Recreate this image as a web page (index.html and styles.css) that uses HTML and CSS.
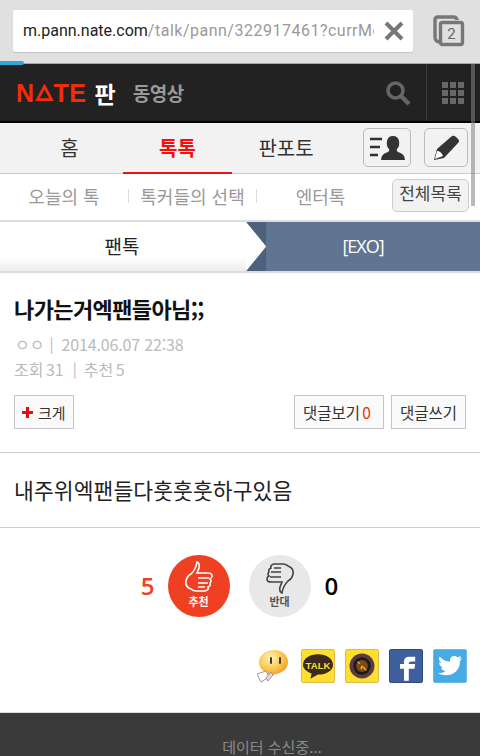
FILE: index.html
```html
<!DOCTYPE html>
<html lang="ko">
<head>
    <meta charset="UTF-8">
    <meta name="viewport" content="width=device-width, initial-scale=1.0">
    <link rel="stylesheet" href="styles.css">
    <title>네이트 판</title>
</head>
<body>
    <div class="page">
        <div class="browser-bar">
            <div class="url-box">
                <div class="url-text"><span class="url-host">m.pann.nate.com</span>/talk/pann/322917461?currMenu=talk</div>
                <svg class="url-close" width="20" height="20" viewBox="0 0 20 20"><path d="M2 2 L18 18 M18 2 L2 18" stroke="#777" stroke-width="4"/></svg>
            </div>
            <svg class="tabs-icon" width="32" height="32" viewBox="0 0 32 32">
                <path d="M7 27 Q2 27 2 22 V5 Q2 2 5 2 H20 Q24 2 24 5" fill="none" stroke="#777" stroke-width="3.4"/>
                <rect x="7.500" y="7.500" width="22" height="22" rx="2" fill="#e0e0e0" stroke="#777" stroke-width="3.4"/>
                <text x="18.500" y="24" class="tabs-count">2</text>
            </svg>
        </div>
        <div class="progress"></div>

        <div class="top-bar">
            <div class="logo">N<svg class="logo-a" width="19" height="18" viewBox="0 0 19 18"><path d="M9.500 2.500 L16.500 15.700 H2.500 Z" fill="none" stroke="#f32c0a" stroke-width="2.800"/></svg>TE</div>
            <div class="logo-pann">판</div>
            <div class="logo-sub">동영상</div>
            <svg class="search-icon" width="26" height="26" viewBox="0 0 26 26"><circle cx="10.500" cy="10.500" r="7.500" fill="none" stroke="#666" stroke-width="3.600"/><path d="M16 16 L24 24" stroke="#666" stroke-width="4.400"/></svg>
            <div class="grid-btn">
                <div class="dots">
                    <i></i><i></i><i></i><i></i><i></i><i></i><i></i><i></i><i></i>
                </div>
            </div>
        </div>

        <div class="main-nav">
            <a class="nav-item home">홈</a>
            <a class="nav-item active">톡톡</a>
            <a class="nav-item pantoto">판포토</a>
            <div class="nav-icon user-btn">
                <svg width="36" height="26" viewBox="0 0 36 26"><path d="M1 4 H13 M1 12 H11 M1 20 H9" stroke="#333" stroke-width="2.400"/><path d="M12 25 Q12 19 19 17 Q21 16 20 14 Q17 11 18 6 Q19 1 24 1 Q29 1 30 6 Q31 11 28 14 Q27 16 29 17 Q36 19 36 25 Z" fill="#333"/></svg>
            </div>
            <div class="nav-icon write-btn">
                <svg width="28" height="28" viewBox="0 0 28 28"><path d="M20 2 Q22 1 24 3 L26 5 Q28 7 26 9 L12 24 L2 26 L5 15 Z" fill="#333"/><path d="M5 17 Q9 17 11 22 L3 25 Z" fill="#fff"/></svg>
            </div>
        </div>

        <div class="sub-nav">
            <a class="sub-item today">오늘의 톡</a>
            <a class="sub-item talkers">톡커들의 선택</a>
            <a class="sub-item enter">엔터톡</a>
            <a class="all-btn">전체목록</a>
        </div>

        <div class="crumbs">
            <div class="crumb-left">팬톡</div>
            <svg class="crumb-arrow" width="20" height="49" viewBox="0 0 20 49">
                <path d="M0 0 L20 24.500 L0 49 H20 V0 Z" fill="#4c617c"/>
                <path d="M0 0 L20 24.500 L0 49 Z" fill="#fff"/>
            </svg>
            <div class="crumb-right">[EXO]</div>
        </div>

        <div class="post-head">
            <h1 class="post-title">나가는거엑팬들아님;;</h1>
            <div class="post-meta"><span class="author">ㅇㅇ</span><span class="bar">|</span><span class="post-date">2014.06.07 22:38</span></div>
            <div class="post-meta stats"><span>조회 31</span><span class="bar">|</span><span>추천 5</span></div>
            <div class="post-actions">
                <a class="btn grow-btn"><span class="plus"></span>크게</a>
                <a class="btn view-btn">댓글보기 <em>0</em></a>
                <a class="btn">댓글쓰기</a>
            </div>
        </div>

        <div class="post-body">내주위엑팬들다훗훗훗하구있음</div>

        <div class="votes">
            <span class="vote-num up">5</span>
            <div class="vote-circle up">
                <svg width="30" height="33" viewBox="0 0 30 33"><path d="M13 1 Q16 2 15 7 L13 12 H24 Q28 12 28 15 Q28 17 26 18 Q28 20 26 22 Q27 25 24 26 Q25 29 21 30 H12 Q9 30 7 28 Q1 26 2 20 Q3 15 7 13 Q12 8 13 1 Z M14 17 H25 M14 22 H24 M14 26 H21" fill="none" stroke="#fff" stroke-width="1.600"/></svg>
                <span>추천</span>
            </div>
            <div class="vote-circle down">
                <svg width="30" height="33" viewBox="0 0 30 33"><path d="M17 32 Q14 31 15 26 L17 21 H6 Q2 21 2 18 Q2 16 4 15 Q2 13 4 11 Q3 8 6 7 Q5 4 9 3 H18 Q21 3 23 5 Q29 7 28 13 Q27 18 23 20 Q18 25 17 32 Z M16 16 H5 M16 11 H6 M16 7 H9" fill="none" stroke="#444" stroke-width="1.600"/></svg>
                <span>반대</span>
            </div>
            <span class="vote-num down">0</span>
        </div>

        <div class="share">
            <svg class="share-icon" width="32" height="34" viewBox="0 0 32 34">
                <defs><radialGradient id="bub" cx="0.4" cy="0.3" r="0.8"><stop offset="0" stop-color="#fff3c4"/><stop offset="0.5" stop-color="#fbc94e"/><stop offset="1" stop-color="#e88a14"/></radialGradient></defs>
                <path d="M17 1 C26 1 31 7 31 13 C31 19 26 24 19 25 L10 28 L11 24 C5 22 2 18 2 13 C2 6 9 1 17 1 Z" fill="url(#bub)"/>
                <path d="M14 9 V14 M23 9 V14" stroke="#4a3a20" stroke-width="2" stroke-linecap="round"/>
                <path d="M0 25 L9 22 L12 28 L4 33 Z" fill="#fff" stroke="#999" stroke-width="1"/>
                <path d="M9 29 L14 23 L16 26 L11 32 Z" fill="#ddd" stroke="#999" stroke-width="1"/>
            </svg>
            <div class="share-box kakao">
                <svg width="30" height="26" viewBox="0 0 28 24">
                    <path d="M14 1 C22 1 28 5 28 11 C28 16 22 20 14 20 L7 24 L8 19 C3 17 0 14 0 11 C0 5 6 1 14 1 Z" fill="#3a2a20"/>
                    <text x="14" y="14.500" class="kakao-text">TALK</text>
                </svg>
            </div>
            <div class="share-box story">
                <svg width="26" height="26" viewBox="0 0 24 24">
                    <circle cx="12" cy="12" r="11.500" fill="#5a3a44"/>
                    <circle cx="12" cy="12" r="8" fill="#1e1a16"/>
                    <circle cx="12" cy="12" r="5.500" fill="#7a4a18"/>
                    <path d="M12 12 L16 16 M12 12 L11 15 M8 8 L10 10" stroke="#f1a21d" stroke-width="1.400"/>
                </svg>
            </div>
            <div class="share-box fb">
                <svg width="16" height="28" viewBox="0 0 20 32"><path d="M5 32 V17 H0 V11 H5 V8 Q5 2 12 2 H19 V8 H14 Q11 8 11 10 V11 H19 L18 17 H11 V32 Z" fill="#fff"/></svg>
            </div>
            <div class="share-box tw">
                <svg width="24" height="22" viewBox="0 0 24 22"><path d="M24 3 Q22 4 21 4 Q23 3 23 1 Q21 2 19.500 2.400 C17 -0.500 12 1 12 5 V6.500 C8 6.500 4 4.500 1.600 1.500 C0.500 4 1.200 6.500 3.200 8 Q2 8 1 7.500 C1 10 3 12 5 12.500 Q4 12.800 3 12.600 C3.600 14.600 5.500 16 7.500 16 C5.500 17.600 3 18.300 0 18 C8 23 22 20 22 6 Q23 5 24 3 Z" fill="#fff"/></svg>
            </div>
        </div>

        <div class="footer">데이터 수신중...</div>

        <div class="scrollbar"></div>
    </div>
</body>
</html>
```

FILE: styles.css
```css
* {
    box-sizing: border-box;
}

html, body {
    margin: 0;
    padding: 0;
}

body {
    font-family: "Noto Sans CJK KR", "Noto Sans", sans-serif;
    background-color: #ffffff;
}

a {
    color: inherit;
    text-decoration: none;
}

.page {
    position: relative;
    width: 480px;
    height: 756px;
    overflow: hidden;
}

/* browser chrome */
.browser-bar {
    display: flex;
    align-items: center;
    height: 64px;
    padding: 0 0 2px 13px;
    background-color: #e0e0e0;
    border-bottom: 1px solid #a8a8a8;
}

.url-box {
    display: flex;
    align-items: center;
    width: 400px;
    height: 42px;
    padding: 0 9px 0 10px;
    background-color: #ffffff;
    border-radius: 2px;
    box-shadow: 0 1px 1px #c4c4c4;
}

.url-text {
    flex: 1;
    overflow: hidden;
    white-space: nowrap;
    font-family: Roboto, sans-serif;
    font-size: 16px;
    letter-spacing: 0.5px;
    color: #999999;
}

.url-host {
    letter-spacing: 0;
    color: #222222;
}

.url-close {
    margin-left: 10px;
}

.tabs-icon {
    margin-left: 20px;
}

.tabs-count {
    font-family: Roboto, sans-serif;
    font-size: 15px;
    fill: #666666;
    text-anchor: middle;
}

.progress {
    position: absolute;
    left: 0;
    top: 61px;
    width: 24px;
    height: 4px;
    background-color: #2fa8dc;
    border-radius: 0 2px 2px 0;
}

/* site header */
.top-bar {
    display: flex;
    align-items: center;
    height: 59px;
    padding-left: 16px;
    background-color: #222222;
    border-bottom: 2px solid #000000;
}

.logo {
    display: flex;
    align-items: center;
    font-family: "Liberation Sans", sans-serif;
    font-size: 25px;
    font-weight: bold;
    letter-spacing: 0.5px;
    color: #f32c0a;
    line-height: 24px;
}

.logo-pann {
    margin-left: 8px;
    font-size: 23px;
    font-weight: bold;
    color: #ffffff;
    line-height: 30px;
}

.logo-sub {
    margin-left: 17px;
    font-size: 19px;
    font-weight: bold;
    color: #999999;
    letter-spacing: -0.5px;
}

.search-icon {
    margin-left: auto;
    margin-right: 15px;
}

.grid-btn {
    display: flex;
    align-items: center;
    justify-content: flex-start;
    width: 54px;
    height: 57px;
    padding-left: 15px;
    border-left: 1px solid #3c3c3c;
}

.dots {
    display: grid;
    grid-template-columns: repeat(3, 6px);
    gap: 2px;
}

.dots i {
    display: block;
    width: 6px;
    height: 6px;
    background-color: #666666;
}

/* main tabs */
.main-nav {
    display: flex;
    align-items: center;
    height: 51px;
    padding-bottom: 1px;
    background-color: #f2f2f2;
    border-bottom: 1px solid #cccccc;
    position: relative;
}

.nav-item {
    font-size: 20px;
    color: #333333;
    text-align: center;
    line-height: 50px;
}

.nav-item.home {
    width: 123px;
    padding-left: 16px;
}

.nav-item.active {
    width: 109px;
    height: 51px;
    margin-bottom: -1px;
    color: #ef1010;
    font-weight: bold;
    border-bottom: 2px solid #ef1010;
}

.nav-item.pantoto {
    width: 108px;
}

.nav-icon {
    display: flex;
    align-items: center;
    justify-content: center;
    height: 39px;
    background-color: #f2f2f2;
    border: 1px solid #bbbbbb;
    border-radius: 5px;
}

.user-btn {
    width: 48px;
    margin-left: 23px;
}

.write-btn {
    width: 44px;
    margin-left: 13px;
}

/* sub tabs */
.sub-nav {
    display: flex;
    align-items: center;
    height: 48px;
    padding-bottom: 2px;
    background-color: #ffffff;
    border-bottom: 2px solid #dddddd;
}

.sub-item {
    font-size: 18px;
    color: #999999;
    text-align: center;
}

.sub-item.today {
    width: 128px;
}

.sub-item.talkers {
    width: 129px;
    border-left: 1px solid #dddddd;
    border-right: 1px solid #dddddd;
    line-height: 14px;
}

.sub-item.enter {
    width: 135px;
    padding-right: 8px;
}

.all-btn {
    width: 77px;
    height: 33px;
    margin-top: -2px;
    font-size: 17px;
    line-height: 26px;
    text-align: center;
    color: #444444;
    background-color: #f2f2f2;
    border: 1px solid #cccccc;
    border-radius: 5px;
}

/* breadcrumbs */
.crumbs {
    display: flex;
    height: 51px;
    border-bottom: 2px solid #dcdce0;
}

.crumb-left {
    width: 246px;
    padding-right: 2px;
    font-size: 19px;
    line-height: 48px;
    text-align: center;
    color: #222222;
    background: linear-gradient(#ffffff 70%, #eeeeee);
}

.crumb-arrow {
    display: block;
}

.crumb-right {
    flex: 1;
    padding-right: 20px;
    font-family: "Open Sans", sans-serif;
    font-size: 18px;
    letter-spacing: -1px;
    line-height: 48px;
    text-align: center;
    color: #ffffff;
    background-color: #5f7590;
}

/* post */
.post-head {
    height: 180px;
    padding: 18px 14px 0;
    border-bottom: 1px solid #cccccc;
}

.post-title {
    margin: 0;
    font-size: 22px;
    font-weight: bold;
    color: #111111;
    letter-spacing: -0.6px;
    line-height: 34px;
}

.post-meta {
    display: flex;
    margin-top: 7px;
    font-size: 16px;
    color: #bbbbbb;
    line-height: 24px;
}

.post-date {
    letter-spacing: -0.15px;
}

.post-meta.stats {
    margin-top: 1px;
    word-spacing: -2px;
}

.author {
    padding-left: 1px;
}

.bar {
    margin: 0 8px 0 5px;
    font-size: 15px;
}

.stats .bar {
    margin: 0 7px 0 9px;
}

.post-actions {
    display: flex;
    gap: 7px;
    margin-top: 14px;
}

.btn {
    display: flex;
    align-items: center;
    height: 34px;
    padding: 0 8px;
    font-size: 15.500px;
    color: #333333;
    background-color: #fafafa;
    border: 1px solid #c4c4c8;
    white-space: pre;
}

.btn em {
    font-style: normal;
    color: #f32c0a;
}

.view-btn {
    padding: 0 12px 0 8px;
    word-spacing: -2px;
}

.grow-btn {
    margin-right: auto;
    padding: 0 7px;
    font-size: 15px;
}

.plus {
    width: 11px;
    height: 11px;
    margin-right: 5px;
    background:
        linear-gradient(#e00f0f, #e00f0f) center / 11px 3px no-repeat,
        linear-gradient(#e00f0f, #e00f0f) center / 3px 11px no-repeat;
}

.post-body {
    height: 75px;
    padding: 0 14px;
    font-size: 21.500px;
    letter-spacing: 0.1px;
    line-height: 73px;
    color: #222222;
    border-bottom: 1px solid #cccccc;
}

/* votes */
.votes {
    display: flex;
    align-items: center;
    justify-content: center;
    height: 120px;
    padding: 0 0 5px 6px;
}

.vote-num {
    font-family: "Open Sans", sans-serif;
    font-size: 24px;
    font-weight: 600;
}

.vote-num.up {
    width: 28px;
    text-align: center;
    color: #ef4023;
}

.vote-num.down {
    width: 28px;
    margin-left: 14px;
    color: #000000;
}

.vote-circle {
    display: flex;
    flex-direction: column;
    align-items: center;
    width: 62px;
    height: 62px;
    padding-top: 6px;
    border-radius: 50%;
    font-size: 11px;
    font-weight: bold;
    line-height: 14px;
}

.vote-circle.up {
    margin-left: 6px;
    background-color: #ef4023;
    color: #ffffff;
}

.vote-circle.down {
    margin-left: 19px;
    background-color: #e8e8e8;
    color: #555555;
}

/* share icons */
.share {
    display: flex;
    align-items: center;
    justify-content: flex-end;
    gap: 10px;
    height: 64px;
    padding: 0 13px 29px 0;
}

.share-icon {
    margin-right: 2px;
}

.share-box {
    display: flex;
    align-items: center;
    justify-content: center;
    width: 34px;
    height: 34px;
    overflow: hidden;
    border-radius: 2px;
}

.share-box.kakao,
.share-box.story {
    background-color: #ffdf2e;
    border: 1px solid #e2b94c;
}

.share-box.fb {
    align-items: flex-end;
    padding-left: 4px;
    background-color: #3f5f9f;
    border: 1px solid #34497c;
}

.share-box.tw {
    background-color: #47aae3;
    border: 1px solid #6bbbe8;
}

.kakao-text {
    font-family: "Liberation Sans", sans-serif;
    font-size: 9px;
    font-weight: bold;
    fill: #ffdf2e;
    text-anchor: middle;
}

/* footer */
.footer {
    height: 60px;
    padding: 26px 0 0 64px;
    font-size: 15px;
    line-height: 16px;
    text-align: center;
    color: #8a8a8a;
    background-color: #3a3a3a;
    border-top: 1px solid #dddddd;
}

.scrollbar {
    position: absolute;
    left: 471px;
    top: 64px;
    width: 4px;
    height: 142px;
    background-color: rgba(130, 130, 130, 0.55);
}
```
